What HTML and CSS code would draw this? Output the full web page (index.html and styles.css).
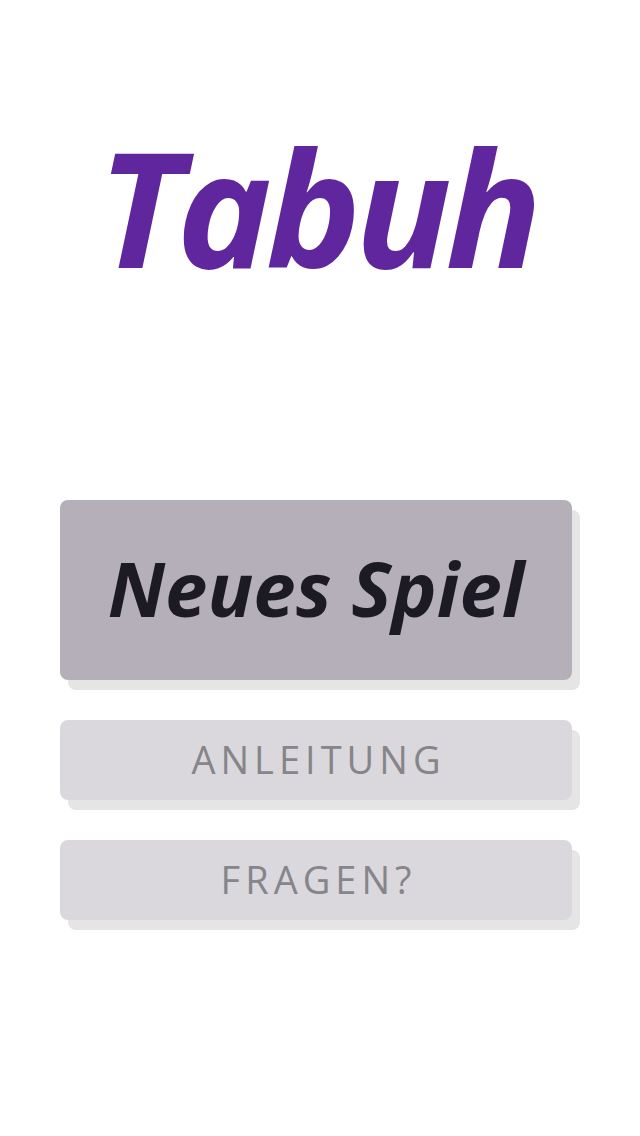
FILE: index.html
```html
<!DOCTYPE html>
<html lang="de">
<head>
    <meta charset="UTF-8">
    <meta name="viewport" content="width=device-width, initial-scale=1.0">
    <title>Tabuh</title>
    <link rel="stylesheet" href="styles.css">
</head>
<body>
    <main class="screen">
        <h1 class="logo">Tabuh</h1>
        <div class="menu">
            <button type="button" class="btn btn-main">Neues Spiel</button>
            <button type="button" class="btn btn-small">Anleitung</button>
            <button type="button" class="btn btn-small">Fragen?</button>
        </div>
    </main>
</body>
</html>
```

FILE: styles.css
```css
body {
    margin: 0;
    padding: 0;
    background-color: #fff;
    font-family: 'Open Sans', 'Noto Sans', sans-serif;
}
.screen {
    width: 640px;
    height: 1136px;
    display: flex;
    flex-direction: column;
    align-items: center;
}
.logo {
    margin: 111px 0 0;
    height: 389px;
    font-size: 160px;
    font-weight: 700;
    font-style: italic;
    line-height: 190px;
    color: #5f269e;
    letter-spacing: -6px;
    text-indent: -6px;
}
/* the button shadows hang 8px to the right, so the column is shifted left */
.menu {
    width: 512px;
    margin-right: 8px;
    display: flex;
    flex-direction: column;
    gap: 40px;
}
.btn {
    display: block;
    width: 100%;
    border: none;
    border-radius: 8px;
    font-family: inherit;
    padding: 0;
    cursor: pointer;
    box-shadow: 8px 10px 0 #e5e5e5;
}
.btn-main {
    height: 180px;
    padding-bottom: 6px;
    background-color: #b5afba;
    color: #1c1a24;
    font-size: 76px;
    font-weight: 700;
    font-style: italic;
    letter-spacing: 0;
}
.btn-small {
    height: 80px;
    padding-bottom: 3px;
    background-color: #dad8dd;
    color: #868589;
    font-size: 38px;
    font-weight: 400;
    text-transform: uppercase;
    letter-spacing: 5px;
    text-indent: 5px;
}
```
